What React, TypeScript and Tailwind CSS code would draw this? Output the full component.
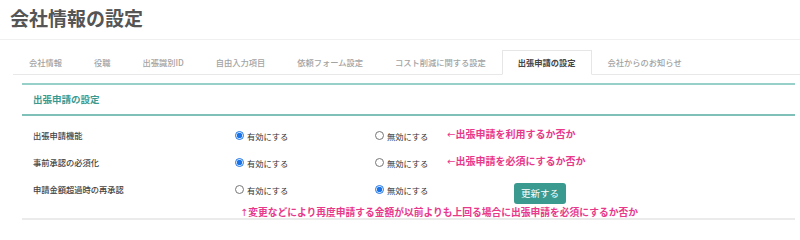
import React from "react";

const tabs = [
  "会社情報",
  "役職",
  "出張識別ID",
  "自由入力項目",
  "依頼フォーム設定",
  "コスト削減に関する設定",
  "出張申請の設定",
  "会社からのお知らせ",
];

function Radio({ checked, label, name }: { checked: boolean; label: string; name: string }) {
  return (
    <label className="flex items-center gap-[3px] text-[8.25px] text-[#333] leading-[12px]">
      <input
        type="radio"
        name={name}
        defaultChecked={checked}
        className="m-0 w-[9px] h-[9px] accent-[#1a73e8]"
      />
      <span>{label}</span>
    </label>
  );
}

function Row({
  label,
  name,
  first,
  second,
  children,
  secondWidth,
}: {
  label: string;
  name: string;
  first: boolean;
  second: boolean;
  children?: React.ReactNode;
  secondWidth: string;
}) {
  return (
    <div className="flex items-center h-[27px]">
      <div className="w-[202px] text-[8.25px] leading-[12px] text-[#444] font-medium -mt-[2px]">{label}</div>
      <div className="w-[140px]">
        <Radio checked={first} label="有効にする" name={name} />
      </div>
      <div className={secondWidth}>
        <Radio checked={second} label="無効にする" name={name} />
      </div>
      {children}
    </div>
  );
}

const arrowFont = { fontFamily: '"DejaVu Sans", sans-serif' };

export default function App() {
  return (
    <div
      className="w-[800px] h-[240px] bg-white overflow-hidden"
      style={{ fontFamily: '"Noto Sans CJK JP", "Noto Sans", sans-serif' }}
    >
      <div className="pt-[5px] px-[10px] text-[19px] leading-[26px] font-bold text-[#555]">会社情報の設定</div>
      <div className="mt-[8px] h-[1px] bg-[#f0f0f0]" />

      <div className="ml-[13px] mt-[10px] flex border-b border-[#e8e8e8]">
        {tabs.map((t) => {
          const active = t === "出張申請の設定";
          return (
            <div
              key={t}
              className={
                active
                  ? "h-[25px] px-[15px] flex items-center text-[8.25px] font-bold text-[#444] border border-[#e6e6e6] border-b-white bg-white -mb-px"
                  : "h-[25px] px-[15px] flex items-center text-[8.25px] font-medium text-[#a3a3a3] border border-transparent -mb-px"
              }
            >
              {t}
            </div>
          );
        })}
      </div>

      <div className="ml-[22px] mr-[5px] mt-[8px]">
        <div className="border-t-2 border-b-2 border-t-[#96d0c8] border-b-[#7fc1b8] h-[33px] flex items-center pl-[11px] text-[9.5px] font-bold text-[#3a9a90]">
          出張申請の設定
        </div>
        <div className="pl-[11px] pt-[6px]">
          <Row label="出張申請機能" name="r1" first={true} second={false} secondWidth="w-[72px]">
            <span className="text-[10px] leading-[12px] font-bold text-[#e8388a] -mt-[2px]">
              <span style={arrowFont} className="font-normal">←</span>出張申請を利用するか否か
            </span>
          </Row>
          <Row label="事前承認の必須化" name="r2" first={true} second={false} secondWidth="w-[72px]">
            <span className="text-[10px] leading-[12px] font-bold text-[#e8388a] -mt-[2px]">
              <span style={arrowFont} className="font-normal">←</span>出張申請を必須にするか否か
            </span>
          </Row>
          <Row label="申請金額超過時の再承認" name="r3" first={false} second={true} secondWidth="w-[139px]">
            <button className="mt-[8px] w-[52px] h-[21px] rounded-[3px] bg-[#3a9a8f] text-white text-[9.5px] leading-[21px]">
              更新する
            </button>
          </Row>
        </div>
        <div className="ml-[218px] mt-[3px] h-[12px] leading-[12px] text-[9.75px] font-bold text-[#e8388a] whitespace-nowrap">
          <span style={arrowFont} className="font-normal">↑</span>変更などにより再度申請する金額が以前よりも上回る場合に出張申請を必須にするか否か
        </div>
        <div className="h-[2px] bg-[#ebebeb]" />
      </div>
    </div>
  );
}
